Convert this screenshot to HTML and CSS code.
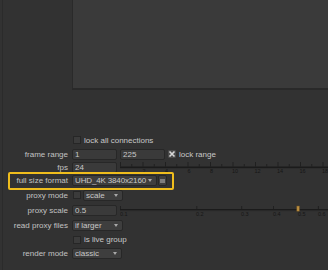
FILE: index.html
```html
<!DOCTYPE html>
<html>
<head>
<meta charset="utf-8">
<link rel="stylesheet" href="styles.css">
</head>
<body>
<div class="app">
  <div class="viewer"></div>
  <div class="form">
    <div class="row h14">
      <span class="label"></span>
      <span class="check"></span><span class="ctext">lock all connections</span>
    </div>
    <div class="row h14">
      <span class="label">frame range</span>
      <span class="field w45">1</span>
      <span class="field w45 ml3">225</span>
      <span class="xcheck"><svg width="8" height="8" viewBox="0 0 8 8"><path d="M1.5 1.5 L6.5 6.5 M6.5 1.5 L1.5 6.5" stroke="#d8d8d8" stroke-width="1.6"/></svg></span>
      <span class="ctext ml4">lock range</span>
    </div>
    <div class="row h13 top">
      <span class="label lt">fps</span>
      <span class="field w45 ft">24</span>
      <svg class="ruler ml3" width="208" height="13" viewBox="0 0 208 13">
        <g stroke="#202020" stroke-width="1">
          <path d="M11.75 3V5.5M34.25 3V5.5M56.75 3V5.5M79.25 3V5.5M101.75 3V5.5M124.25 3V5.5M146.75 3V5.5M169.25 3V5.5M191.75 3V5.5"/>
          <path d="M0.5 1V5.5M23 1V5.5M45.5 1V5.5M68 1V5.5M90.5 1V5.5M113 1V5.5M135.5 1V5.5M158 1V5.5M180.5 1V5.5M203 1V5.5"/>
        </g>
        <rect x="0" y="5.5" width="208" height="1.5" fill="#1b1b1b"/>
        <rect x="0" y="7" width="208" height="0.6" fill="#2a2a2a"/>
        <g class="rl">
          <text x="22.5" y="11.8">2</text>
          <text x="45" y="11.8">4</text>
          <text x="67.5" y="11.8">6</text>
          <text x="90" y="11.8">8</text>
          <text x="112" y="11.8">10</text>
          <text x="134.5" y="11.8">12</text>
          <text x="157" y="11.8">14</text>
          <text x="179.5" y="11.8">16</text>
          <text x="202" y="11.8">18</text>
        </g>
      </svg>
    </div>
    <div class="row h13">
      <span class="label">full size format</span>
      <span class="drop w85"><span class="tight">UHD_4K 3840x2160</span><span class="arrow"></span></span>
      <span class="btn"><svg width="5" height="4" viewBox="0 0 5 4"><path d="M0 1H5M0 3H5" stroke="#bdbdbd" stroke-width="1"/></svg></span>
    </div>
    <div class="row h16">
      <span class="label">proxy mode</span>
      <span class="check"></span>
      <span class="drop w40 ml2"><span>scale</span><span class="arrow"></span></span>
    </div>
    <div class="row h15">
      <span class="label">proxy scale</span>
      <span class="field w45">0.5</span>
      <svg class="ruler ml3" width="208" height="15" viewBox="0 0 208 15">
        <g stroke="#202020" stroke-width="1">
          <path d="M0.5 3V6M76.8 3V6M121.7 3V6M153.5 3V6M178.2 3V6M198.4 3V6"/>
        </g>
        <rect x="0" y="6" width="208" height="1.5" fill="#1b1b1b"/>
        <rect x="0" y="7.5" width="208" height="0.6" fill="#2a2a2a"/>
        <g class="rl">
          <text x="0" y="12.8">0.1</text>
          <text x="76" y="12.8">0.2</text>
          <text x="121" y="12.8">0.3</text>
          <text x="153" y="12.8">0.4</text>
          <text x="178" y="12.8">0.5</text>
          <text x="198" y="12.8">0.6</text>
        </g>
        <rect x="176.8" y="3" width="2.6" height="5.2" fill="#b98d3f" stroke="#6e5224" stroke-width="0.5"/>
      </svg>
    </div>
    <div class="row h15">
      <span class="label">read proxy files</span>
      <span class="drop w51"><span>if larger</span><span class="arrow"></span></span>
    </div>
    <div class="row h13">
      <span class="label"></span>
      <span class="check"></span><span class="ctext">is live group</span>
    </div>
    <div class="row h15">
      <span class="label">render mode</span>
      <span class="drop w50"><span>classic</span><span class="arrow"></span></span>
    </div>
  </div>
  <div class="highlight"></div>
</div>
</body>
</html>
```

FILE: styles.css
```css
html, body {
  margin: 0;
  padding: 0;
}
body {
  background: #323232;
  width: 328px;
  height: 270px;
  overflow: hidden;
  font-family: "Liberation Sans", Arial, sans-serif;
  font-size: 8px;
  color: #c8c8c8;
}
.app {
  position: relative;
  margin-left: 2px;
  border-left: 1px solid #2b2b2b;
  height: 270px;
}
.viewer {
  margin-left: 69px;
  height: 88px;
  background: #3a3a3a;
  border-left: 1px solid #2a2a2a;
  border-bottom: 2px solid #292929;
}
.form {
  margin-top: 43px;
}
.row {
  display: flex;
  align-items: center;
  white-space: nowrap;
}
.row.top {
  align-items: flex-start;
}
.h13 { height: 13px; }
.h14 { height: 14px; }
.h15 { height: 15px; }
.h16 { height: 16px; }
.label {
  width: 65px;
  margin-right: 4px;
  text-align: right;
  flex: none;
  color: #c2c2c2;
}
.label.lt {
  margin-top: 2px;
}
.ml2 { margin-left: 2px; }
.ml3 { margin-left: 3px; }
.ml4 { margin-left: 4px; }
.field {
  box-sizing: border-box;
  height: 11px;
  line-height: 9px;
  border: 1px solid #272727;
  border-radius: 2px;
  background: #3a3a3a;
  padding: 0 2px;
  flex: none;
}
.field.ft {
  margin-top: 1px;
}
.w45 { width: 45px; }
.w40 { width: 40px; }
.w50 { width: 50px; }
.w51 { width: 51px; }
.w85 { width: 85px; }
.check {
  box-sizing: border-box;
  width: 8px;
  height: 8px;
  margin-left: 1px;
  border: 1px solid #262626;
  background: #3b3b3b;
  flex: none;
}
.ctext {
  margin-left: 3px;
}
.xcheck {
  display: flex;
  width: 8px;
  height: 8px;
  margin-left: 3px;
  background: #4a4a4a;
  border-radius: 1px;
  flex: none;
}
.drop {
  box-sizing: border-box;
  height: 11px;
  line-height: 9px;
  border: 1px solid #272727;
  border-radius: 2px;
  background: #3e3e3e;
  padding: 0 4px 0 2px;
  display: flex;
  align-items: center;
  justify-content: space-between;
  flex: none;
}
.tight {
  letter-spacing: -0.15px;
}
.arrow {
  width: 0;
  height: 0;
  border-left: 2px solid transparent;
  border-right: 2px solid transparent;
  border-top: 3px solid #a8a8a8;
}
.btn {
  box-sizing: border-box;
  width: 9px;
  height: 11px;
  margin-left: 1px;
  border: 1px solid #272727;
  border-radius: 2px;
  background: #3e3e3e;
  display: flex;
  align-items: center;
  justify-content: center;
  flex: none;
}
.ruler {
  display: block;
  flex: none;
}
.rl text {
  font-family: "Liberation Sans", Arial, sans-serif;
  font-size: 5.5px;
  fill: #161616;
}
.highlight {
  position: absolute;
  left: 5px;
  top: 172px;
  width: 166px;
  height: 18px;
  box-sizing: border-box;
  border: 2px solid #efbd1d;
  border-radius: 2px;
}
```
